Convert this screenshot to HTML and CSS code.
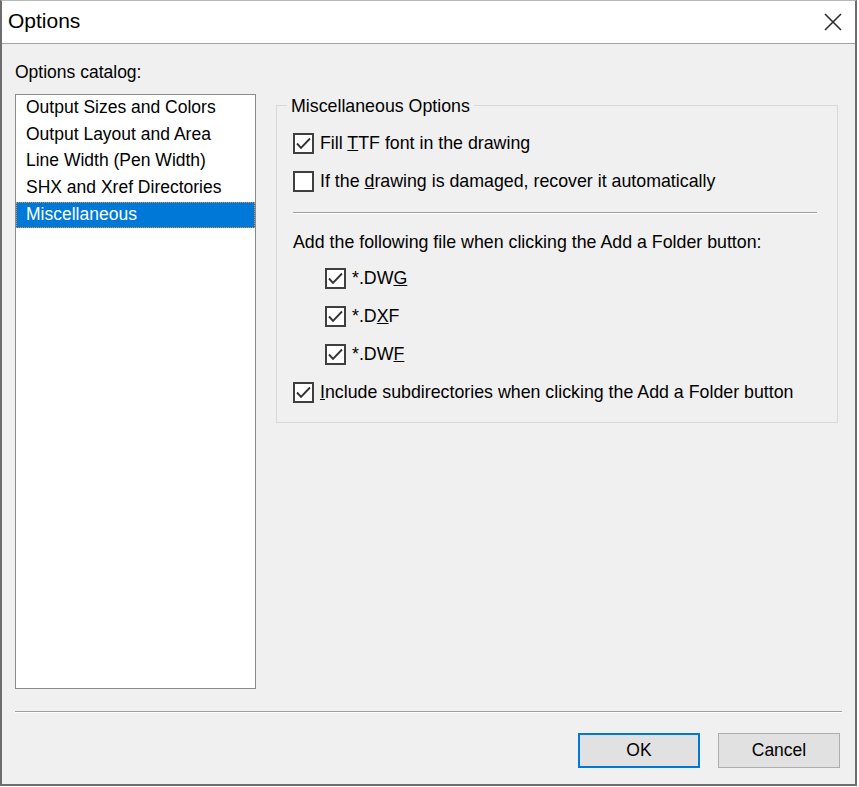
FILE: index.html
```html
<!DOCTYPE html>
<html>
<head>
<meta charset="utf-8">
<title>Options</title>
<link rel="stylesheet" href="styles.css">
</head>
<body>
<div class="window">
  <div class="titlebar">
    <span class="title">Options</span>
    <svg class="close" width="18" height="18" viewBox="0 0 18 18"><path d="M1 1 L17 17 M17 1 L1 17" stroke="#2b2b2b" stroke-width="1.6" fill="none"/></svg>
  </div>
  <div class="content">
    <div class="main">
      <div class="left">
        <div class="label">Options catalog:</div>
        <div class="listbox">
          <div class="item">Output Sizes and Colors</div>
          <div class="item">Output Layout and Area</div>
          <div class="item">Line Width (Pen Width)</div>
          <div class="item">SHX and Xref Directories</div>
          <div class="item selected">Miscellaneous</div>
        </div>
      </div>
      <div class="group">
        <span class="group-title">Miscellaneous Options</span>
        <div class="row"><span class="cb"><svg viewBox="0 0 17 17"><polyline points="2,8.5 6,12.8 15,3.5"/></svg></span><span class="lbl">Fill <u>T</u>TF font in the drawing</span></div>
        <div class="row"><span class="cb"></span><span class="lbl">If the <u>d</u>rawing is damaged, recover it automatically</span></div>
        <div class="sep"></div>
        <div class="text">Add the following file when clicking the Add a Folder button:</div>
        <div class="sub">
          <div class="row"><span class="cb"><svg viewBox="0 0 17 17"><polyline points="2,8.5 6,12.8 15,3.5"/></svg></span><span class="lbl ext">*.DW<u>G</u></span></div>
          <div class="row"><span class="cb"><svg viewBox="0 0 17 17"><polyline points="2,8.5 6,12.8 15,3.5"/></svg></span><span class="lbl ext">*.D<u>X</u>F</span></div>
          <div class="row"><span class="cb"><svg viewBox="0 0 17 17"><polyline points="2,8.5 6,12.8 15,3.5"/></svg></span><span class="lbl ext">*.DW<u>F</u></span></div>
        </div>
        <div class="row"><span class="cb"><svg viewBox="0 0 17 17"><polyline points="2,8.5 6,12.8 15,3.5"/></svg></span><span class="lbl"><u>I</u>nclude subdirectories when clicking the Add a Folder button</span></div>
      </div>
    </div>
    <div class="hsep"></div>
    <div class="buttons">
      <button class="btn default">OK</button>
      <button class="btn">Cancel</button>
    </div>
  </div>
</div>
</body>
</html>
```
FILE: styles.css
```css
html, body {
  margin: 0;
  padding: 0;
  background: #ffffff;
}
body {
  font-family: "Liberation Sans", Arial, sans-serif;
  font-size: 17.5px;
  color: #000;
}
.window {
  width: 857px;
  height: 786px;
  box-sizing: border-box;
  border-left: 2px solid #6d6d6d;
  border-right: 2px solid #6d6d6d;
  border-bottom: 2px solid #6d6d6d;
  border-top: 1px solid #b9b9b9;
  background: #f0f0f0;
}
.titlebar {
  height: 42px;
  background: #ffffff;
  border-bottom: 1px solid #a3a3a3;
  display: flex;
  align-items: center;
  justify-content: space-between;
  padding: 0 13px 0 6px;
}
.title {
  font-size: 21px;
  color: #000;
  position: relative;
  top: -1px;
}
.close {
  display: block;
}
.content {
  height: 740px;
  box-sizing: border-box;
  padding: 18px 13px 0 13px;
  background: #f0f0f0;
}
.main {
  display: grid;
  grid-template-columns: 241px 562px;
  column-gap: 20px;
  align-items: start;
}
.label {
  line-height: 20px;
  height: 20px;
}
.listbox {
  margin-top: 12px;
  height: 595px;
  box-sizing: border-box;
  border: 1px solid #8a8a8a;
  background: #ffffff;
}
.item {
  height: 26.67px;
  line-height: 24px;
  padding-left: 10px;
  white-space: nowrap;
}
.item.selected {
  background: #0078d7;
  color: #ffffff;
  outline: 1px dotted #e8913a;
  outline-offset: -1px;
}
.group {
  position: relative;
  margin-top: 43px;
  border: 1px solid #d9d9d9;
  padding: 18px 20px 11px 16px;
  font-size: 17.8px;
}
.group-title {
  position: absolute;
  top: -12px;
  left: 10px;
  padding: 0 4px;
  line-height: 24px;
  background: #f0f0f0;
}
.row {
  height: 38px;
  display: flex;
  align-items: center;
  white-space: nowrap;
}
.cb {
  width: 21px;
  height: 21px;
  box-sizing: border-box;
  border: 2px solid #3f3f3f;
  background: #ffffff;
  flex: none;
  display: block;
}
.cb svg {
  display: block;
  width: 17px;
  height: 17px;
}
.cb polyline {
  fill: none;
  stroke: #333333;
  stroke-width: 1.9;
}
.lbl {
  margin-left: 6px;
  line-height: 22px;
}
.lbl.ext {
  margin-left: 6px;
}
.sep {
  margin-top: 12px;
  height: 0;
  border-top: 1px solid #a0a0a0;
  border-bottom: 1px solid #ffffff;
}
.text {
  margin-top: 16px;
  line-height: 24px;
  height: 24px;
  white-space: nowrap;
}
.sub {
  margin-top: 5px;
  padding-left: 32px;
}
.hsep {
  margin-top: 22px;
  height: 0;
  border-top: 1px solid #a0a0a0;
  border-bottom: 1px solid #ffffff;
}
.buttons {
  margin-top: 20px;
  display: flex;
  justify-content: flex-end;
  gap: 18px;
  padding-right: 2px;
}
.btn {
  width: 122px;
  height: 35px;
  box-sizing: border-box;
  border: 1px solid #adadad;
  background: #e1e1e1;
  font-family: "Liberation Sans", Arial, sans-serif;
  font-size: 17.5px;
  color: #000;
  padding: 0;
  margin: 0;
}
.btn.default {
  border: 2px solid #0078d7;
}
```
